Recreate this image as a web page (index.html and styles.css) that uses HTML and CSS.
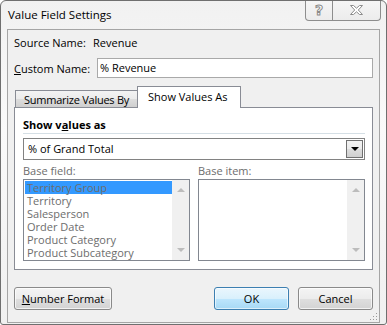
FILE: index.html
```html
<!DOCTYPE html>
<html>
<head>
<meta charset="utf-8">
<link rel="stylesheet" href="styles.css">
</head>
<body>
<div class="window">
  <div class="titlebar">
    <span class="title">Value Field Settings</span>
    <div class="caption-btns">
      <div class="cbtn help"><span class="qmark">?</span></div>
      <div class="cbtn close">
        <svg width="13" height="10" viewBox="0 0 13 10"><polygon points="0.5,0.5 3.5,0.5 6.5,3.2 9.5,0.5 12.5,0.5 8.3,5 12.5,9.5 9.5,9.5 6.5,6.8 3.5,9.5 0.5,9.5 4.7,5" fill="#ffffff" stroke="#8c8c8c" stroke-width="1"/></svg>
      </div>
    </div>
  </div>
  <div class="client">
    <div class="row source-row">
      <span class="lbl-src">Source Name:</span>
      <span>Revenue</span>
    </div>
    <div class="row custom-row">
      <span class="lbl-custom"><u>C</u>ustom Name:</span>
      <div class="textbox">% Revenue</div>
    </div>
    <div class="tabs">
      <div class="tab">Summarize Values By</div>
      <div class="tab active">Show Values As</div>
    </div>
    <div class="panel">
      <div class="heading">Show v<u>a</u>lues as</div>
      <div class="combo">
        <span class="combo-text">% of Grand Total</span>
        <div class="combo-btn"><span class="tri-down"></span></div>
      </div>
      <div class="cols">
        <div class="col">
          <div class="sublbl">Base field:</div>
          <div class="listbox">
            <div class="items">
              <div class="item selected">Territory Group</div>
              <div class="item">Territory</div>
              <div class="item">Salesperson</div>
              <div class="item">Order Date</div>
              <div class="item">Product Category</div>
              <div class="item">Product Subcategory</div>
            </div>
            <div class="vscroll"><span class="arr-up"></span><span class="arr-down"></span></div>
          </div>
        </div>
        <div class="col">
          <div class="sublbl">Base item:</div>
          <div class="listbox">
            <div class="items"></div>
            <div class="vscroll"><span class="arr-up"></span><span class="arr-down"></span></div>
          </div>
        </div>
      </div>
    </div>
    <div class="buttons">
      <div class="btn wide"><u>N</u>umber Format</div>
      <div class="spacer"></div>
      <div class="btn default">OK</div>
      <div class="btn">Cancel</div>
    </div>
    <svg class="grip" width="8" height="8" viewBox="0 0 8 8">
      <rect x="6" y="0" width="1" height="1" fill="#9a9a9a"/>
      <rect x="3" y="3" width="1" height="1" fill="#9a9a9a"/>
      <rect x="6" y="3" width="1" height="1" fill="#9a9a9a"/>
      <rect x="0" y="6" width="1" height="1" fill="#9a9a9a"/>
      <rect x="3" y="6" width="1" height="1" fill="#9a9a9a"/>
      <rect x="6" y="6" width="1" height="1" fill="#9a9a9a"/>
    </svg>
  </div>
</div>
</body>
</html>
```

FILE: styles.css
```css
* { box-sizing: border-box; }
html, body { margin: 0; padding: 0; background: #ffffff; }
body {
  font-family: "Open Sans", "Noto Sans", sans-serif;
  font-size: 11px;
  color: #000000;
}
.window {
  width: 387px;
  height: 325px;
  border: 1px solid #6f6f6f;
  border-radius: 6px 6px 3px 3px;
  background: linear-gradient(180deg, #f1f1f1 0%, #fafafa 40%, #f0f0f0 100%);
  padding: 0 6px 1px 6px;
  display: flex;
  flex-direction: column;
  overflow: hidden;
}
.titlebar {
  height: 28px;
  display: flex;
  align-items: flex-start;
  flex: none;
}
.title {
  font-size: 11.5px;
  line-height: 16px;
  padding-left: 1px;
  margin-top: 6px;
  color: #000;
}
.caption-btns {
  margin-left: auto;
  margin-right: -1px;
  margin-top: -1px;
  display: flex;
  height: 21px;
  border: 1px solid #8d8d8d;
  border-top: none;
  border-radius: 0 0 4px 4px;
  background: linear-gradient(180deg, #f6f6f6, #ececec);
}
.cbtn {
  height: 20px;
  display: flex;
  align-items: center;
  justify-content: center;
}
.help {
  width: 27px;
  border-right: 1px solid #8d8d8d;
}
.close { width: 47px; }
.qmark {
  font-family: "DejaVu Sans", sans-serif;
  font-weight: bold;
  font-size: 14px;
  line-height: 14px;
  color: #ffffff;
  -webkit-text-stroke: 1px #8a8a8a;
  margin-top: -1px;
}
.client {
  flex: 1;
  position: relative;
  border: 1px solid #a5a5a5;
  background: #f0f0f0;
  padding: 5px 6px 12px 6px;
  display: flex;
  flex-direction: column;
}
.row { display: flex; align-items: center; }
.source-row { height: 16px; line-height: 16px; }
.lbl-src { width: 79px; }
.custom-row { height: 20px; margin-top: 7px; }
.lbl-custom { width: 83px; }
.textbox {
  flex: 1;
  height: 20px;
  border: 1px solid #a9a9a9;
  background: #ffffff;
  padding-left: 2px;
  line-height: 18px;
}
.tabs {
  margin-top: 8px;
  height: 22px;
  margin-bottom: -1px;
  display: flex;
  align-items: flex-end;
  padding-left: 1px;
}
.tab {
  height: 17px;
  border: 1px solid #898c95;
  border-bottom: none;
  background: linear-gradient(180deg, #f3f3f3 0%, #ebebeb 50%, #dddddd 51%, #cfcfcf 100%);
  width: 123px;
  padding-left: 8px;
  line-height: 17px;
  margin-bottom: 1px;
  letter-spacing: -0.25px;
  white-space: nowrap;
}
.tab.active {
  position: relative;
  z-index: 1;
  height: 22px;
  width: 104px;
  margin-left: -1px;
  margin-bottom: 0;
  background: #ffffff;
  padding-left: 10px;
  line-height: 20px;
  letter-spacing: 0;
}
.panel {
  height: 163px;
  flex: none;
  border: 1px solid #898c95;
  background: #ffffff;
  padding: 8px 7px 8px 8px;
  display: flex;
  flex-direction: column;
}
.heading {
  height: 18px;
  line-height: 17px;
  font-weight: bold;
  border-bottom: 1px solid #d5dfe5;
}
.combo {
  margin-top: 4px;
  height: 22px;
  border: 1px solid #828282;
  display: flex;
  align-items: center;
  padding: 1px;
}
.combo-text { flex: 1; padding-left: 3px; line-height: 18px; }
.combo-btn {
  width: 17px;
  height: 18px;
  border: 1px solid #707070;
  background: linear-gradient(180deg, #f2f2f2 0%, #ebebeb 50%, #dddddd 51%, #cfcfcf 100%);
  display: flex;
  align-items: center;
  justify-content: center;
}
.tri-down {
  width: 0; height: 0;
  border-left: 4px solid transparent;
  border-right: 4px solid transparent;
  border-top: 4px solid #000000;
}
.cols {
  display: flex;
  gap: 8px;
  margin-top: 3px;
}
.col { width: 167px; display: flex; flex-direction: column; }
.sublbl {
  height: 16px;
  line-height: 16px;
  color: #6d6d6d;
}
.listbox {
  height: 82px;
  border: 1px solid #828790;
  background: #ffffff;
  display: flex;
}
.items {
  flex: 1;
  padding: 1px 0 0 1px;
  overflow: hidden;
}
.item {
  height: 13px;
  line-height: 13px;
  padding-left: 2px;
  color: #6d6d6d;
  white-space: nowrap;
  font-size: 11px;
}
.item.selected { background: #3399ff; }
.vscroll {
  width: 17px;
  background: #f0f0f0;
  display: flex;
  flex-direction: column;
  align-items: center;
  justify-content: space-between;
  padding: 8px 0 8px 0;
}
.arr-up {
  width: 0; height: 0;
  border-left: 4px solid transparent;
  border-right: 4px solid transparent;
  border-bottom: 4px solid #bcbcbc;
}
.arr-down {
  width: 0; height: 0;
  border-left: 4px solid transparent;
  border-right: 4px solid transparent;
  border-top: 4px solid #bcbcbc;
}
.buttons {
  margin-top: 17px;
  display: flex;
  gap: 9px;
  height: 23px;
}
.spacer { flex: 1; }
.btn {
  width: 75px;
  height: 23px;
  border: 1px solid #8a8a8a;
  border-radius: 3px;
  background: linear-gradient(180deg, #f4f4f4 0%, #ececec 50%, #dfdfdf 51%, #d3d3d3 100%);
  display: flex;
  align-items: center;
  justify-content: center;
  box-shadow: inset 0 0 0 1px rgba(255,255,255,0.7);
}
.btn.wide { width: 98px; }
.btn.default {
  border-color: #3c7fb1;
  background: linear-gradient(180deg, #eaf6fd 0%, #d9f0fc 50%, #bee6fd 51%, #a7d9f5 100%);
  box-shadow: inset 0 0 0 1px rgba(255,255,255,0.6);
}
.grip {
  position: absolute;
  right: 1px;
  bottom: 1px;
}
```
